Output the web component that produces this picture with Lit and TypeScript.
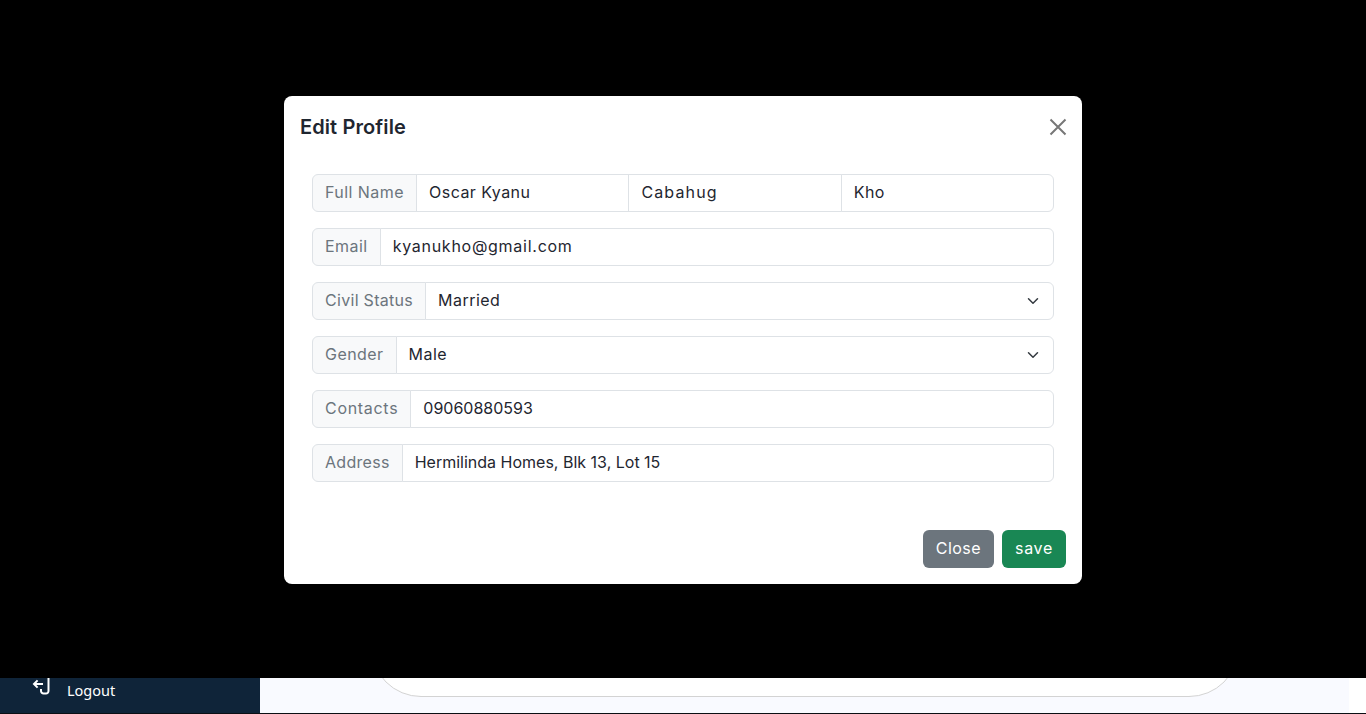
import { LitElement, html, css, svg } from 'lit';
import { customElement } from 'lit/decorators.js';

const chevron = svg`<path d="m2 5 6 6 6-6" fill="none" stroke="#343a40" stroke-width="2" stroke-linecap="round" stroke-linejoin="round"></path>`;

@customElement('app-root')
export class AppRoot extends LitElement {
  static styles = css`
    :host {
      display: block;
      position: relative;
      height: 714px;
      overflow: hidden;
      font-family: Inter, "Noto Sans", sans-serif;
      font-size: 16px;
      color: #1f2630;
      background: #fff;
    }

    .page {
      display: flex;
      height: 713px;
      border-bottom: 1px solid #0b0f14;
    }

    .sidebar {
      box-sizing: border-box;
      width: 260px;
      background: #0f2439;
      display: flex;
      flex-direction: column;
      justify-content: flex-end;
      color: #fff;
    }

    .logout {
      display: flex;
      align-items: flex-start;
      gap: 15px;
      height: 35px;
      padding-left: 32px;
      font-family: "Noto Sans", sans-serif;
      font-size: 14.5px;
    }

    .logout svg {
      flex: none;
    }

    .logout span {
      margin-top: 2px;
    }

    .main {
      flex: 1;
      background: #f9faff;
      margin-right: 17px;
      display: flex;
      justify-content: center;
      align-items: flex-end;
      padding-bottom: 16px;
    }

    .card {
      box-sizing: border-box;
      width: 868px;
      height: 300px;
      background: #fff;
      border: 1px solid #d3d3d3;
      border-radius: 50px;
    }

    .overlay {
      position: absolute;
      inset: 0 0 36px 0;
      background: #000;
      display: flex;
      justify-content: center;
      align-items: flex-start;
      padding-top: 96px;
    }

    .modal {
      width: 798px;
      height: 488px;
      background: #fff;
      border-radius: 8px;
      display: flex;
      flex-direction: column;
    }

    .modal-head {
      display: flex;
      justify-content: space-between;
      align-items: center;
      height: 62px;
      padding: 0 15px 0 16px;
    }

    .modal-head h5 {
      margin: 0;
      font-size: 20px;
      font-weight: 600;
      letter-spacing: 0.1px;
      color: #1f2630;
    }

    .close-x {
      display: flex;
      padding: 0;
      border: 0;
      background: none;
    }

    .modal-body {
      flex: 1;
      padding: 16px 28px;
      display: flex;
      flex-direction: column;
      gap: 16px;
    }

    .group {
      display: flex;
      height: 38px;
      box-sizing: border-box;
    }

    .label {
      box-sizing: border-box;
      display: flex;
      align-items: center;
      padding: 0 12px 2px;
      background: #f8f9fa;
      border: 1px solid #dee2e6;
      border-radius: 6px 0 0 6px;
      color: #6c757d;
      white-space: nowrap;
      letter-spacing: 0.45px;
    }

    .label.narrow {
      letter-spacing: 0.3px;
    }

    .label.wide {
      letter-spacing: 0.7px;
    }

    .control {
      flex: 1;
      min-width: 0;
      box-sizing: border-box;
      height: 38px;
      margin: 0 0 0 -1px;
      padding: 0 12px 2px;
      border: 1px solid #dee2e6;
      border-radius: 0;
      background: #fff;
      font: inherit;
      color: #1f2630;
      letter-spacing: 0.45px;
      outline: none;
      appearance: none;
    }

    .control.tight {
      letter-spacing: 0;
    }

    .control.wide {
      letter-spacing: 0.73px;
    }

    .control.wider {
      letter-spacing: 1.15px;
    }

    .group > .control:last-child,
    .select-wrap:last-child .control {
      border-radius: 0 6px 6px 0;
    }

    .select-wrap {
      flex: 1;
      position: relative;
      display: flex;
    }

    .select-wrap svg {
      position: absolute;
      right: 13px;
      top: 13px;
      pointer-events: none;
    }

    .modal-foot {
      display: flex;
      justify-content: flex-end;
      gap: 8px;
      padding: 0 16px 16px;
    }

    .btn {
      height: 38px;
      padding: 0 13px 2px;
      border: 0;
      border-radius: 6px;
      font: inherit;
      letter-spacing: 0.45px;
      color: #fff;
    }

    .btn-close {
      background: #6c757d;
    }

    .btn-save {
      background: #198754;
      letter-spacing: 0.7px;
    }
  `;

  render() {
    return html`
      <div class="page">
        <aside class="sidebar">
          <div class="logout">
            <svg width="20" height="20" viewBox="0 0 20 20" fill="none" stroke="#fff" stroke-width="2">
              <path d="M11 6H2m3.6-3.6L2 6l3.6 3.6"></path>
              <path d="M16.5 0v13a2.5 2.5 0 0 1-2.5 2.5h-2.5A2.5 2.5 0 0 1 9 13v-2"></path>
            </svg>
            <span>Logout</span>
          </div>
        </aside>
        <main class="main"><div class="card"></div></main>
      </div>
      <div class="overlay">
        <section class="modal">
          <header class="modal-head">
            <h5>Edit Profile</h5>
            <button class="close-x" aria-label="Close">
              <svg width="18" height="18" viewBox="0 0 18 18" fill="none" stroke="#777" stroke-width="2">
                <path d="M1.5 1.5l15 15M16.5 1.5l-15 15"></path>
              </svg>
            </button>
          </header>
          <div class="modal-body">
            <div class="group">
              <span class="label">Full Name</span>
              <input class="control" .value=${'Oscar Kyanu'} />
              <input class="control wider" .value=${'Cabahug'} />
              <input class="control" .value=${'Kho'} />
            </div>
            <div class="group">
              <span class="label">Email</span>
              <input class="control wide" .value=${'kyanukho@gmail.com'} />
            </div>
            ${this.renderSelect('Civil Status', 'Married')}
            ${this.renderSelect('Gender', 'Male')}
            <div class="group">
              <span class="label wide">Contacts</span>
              <input class="control tight" .value=${'09060880593'} />
            </div>
            <div class="group">
              <span class="label narrow">Address</span>
              <input class="control tight" .value=${'Hermilinda Homes, Blk 13, Lot 15'} />
            </div>
          </div>
          <footer class="modal-foot">
            <button class="btn btn-close">Close</button>
            <button class="btn btn-save">save</button>
          </footer>
        </section>
      </div>
    `;
  }

  renderSelect(label: string, value: string) {
    return html`
      <div class="group">
        <span class="label ${label === 'Civil Status' ? 'narrow' : ''}">${label}</span>
        <div class="select-wrap">
          <select class="control">
            <option>${value}</option>
          </select>
          <svg width="16" height="12" viewBox="0 0 16 16">${chevron}</svg>
        </div>
      </div>
    `;
  }
}
